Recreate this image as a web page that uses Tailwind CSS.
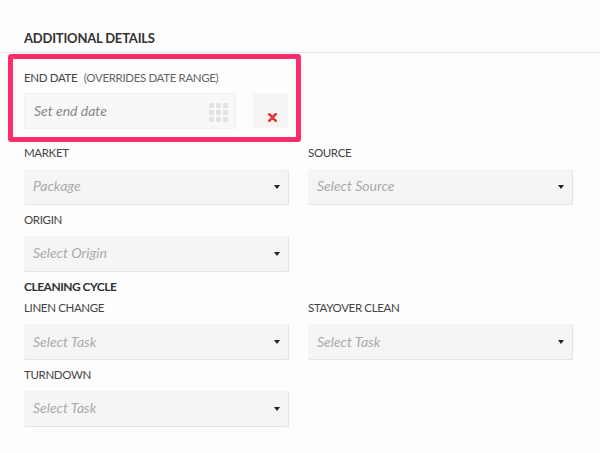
<!DOCTYPE html>
<html lang="en">
<head>
    <meta charset="UTF-8">
    <script src="https://cdn.jsdelivr.net/npm/@tailwindcss/browser@4"></script>
</head>
<body class="bg-[#fdfdfd] font-['Lato',sans-serif] text-[#444] w-[600px] h-[453px] overflow-hidden">
    <div class="relative">
        <!-- Heading -->
        <div class="h-[53px] pl-6 pt-[30px] border-b border-[#e6e6e6]">
            <h2 class="text-[13px] leading-4 font-bold text-[#333] tracking-[-0.2px]">ADDITIONAL DETAILS</h2>
        </div>

        <!-- End date (highlighted) -->
        <div class="absolute left-[8px] top-[54px] w-[293px] h-[88px] border-[5px] border-[#ff2d6b] rounded-[3px]"></div>
        <div class="h-[89px] pl-6 pt-[17px]">
            <div class="h-4 text-[11.5px] leading-4 tracking-[-0.35px] text-[#444]">END DATE <span class="ml-1 text-[#666]">(OVERRIDES DATE RANGE)</span></div>
            <div class="flex mt-[7px]">
                <div class="w-[212px] h-9 bg-[#f8f8f8] border border-[#f3f3f3] flex items-center justify-between pl-[9px] pr-[7px]">
                    <span class="pb-[2px] text-[14px] italic text-[#888]">Set end date</span>
                    <svg class="mt-[2px]" width="19" height="19" viewBox="0 0 19 19" fill="#e3e3e3">
                        <rect x="0" y="0" width="5" height="5" rx="1"/><rect x="7" y="0" width="5" height="5" rx="1"/><rect x="14" y="0" width="5" height="5" rx="1"/>
                        <rect x="0" y="7" width="5" height="5" rx="1"/><rect x="7" y="7" width="5" height="5" rx="1"/><rect x="14" y="7" width="5" height="5" rx="1"/>
                        <rect x="0" y="14" width="5" height="5" rx="1"/><rect x="7" y="14" width="5" height="5" rx="1"/><rect x="14" y="14" width="5" height="5" rx="1"/>
                    </svg>
                </div>
                <div class="ml-[17px] mt-px w-[35px] h-[34px] bg-[#f5f5f5] flex items-end justify-end pb-[6px] pr-[11px]">
                    <svg width="9" height="9" viewBox="0 0 9 9" stroke="#ea3232" stroke-width="2.6" stroke-linecap="round"><path d="M1.2 1.2l6.6 6.6M7.8 1.2L1.2 7.8"/></svg>
                </div>
            </div>
        </div>

        <!-- Market / source -->
        <div class="grid grid-cols-[265px_265px] gap-x-[19px] pl-6">
            <div class="h-[66px] pt-[3px]">
                <div class="h-4 text-[11.5px] leading-4 tracking-[-0.35px]">MARKET</div>
                <div class="mt-2 h-9 bg-[#f5f5f5] border-b border-r border-[#e4e4e4] rounded-[2px] flex items-center justify-between pl-[9px] pr-[8px]">
                    <span class="pb-[2px] text-[14px] italic text-[#aaa]">Package</span>
                    <span class="w-0 h-0 border-x-[3px] border-x-transparent border-t-[4px] border-t-[#222]"></span>
                </div>
            </div>
            <div class="h-[66px] pt-[3px]">
                <div class="h-4 text-[11.5px] leading-4 tracking-[-0.35px]">SOURCE</div>
                <div class="mt-2 h-9 bg-[#f5f5f5] border-b border-r border-[#e4e4e4] rounded-[2px] flex items-center justify-between pl-[9px] pr-[8px]">
                    <span class="pb-[2px] text-[14px] italic text-[#aaa]">Select Source</span>
                    <span class="w-0 h-0 border-x-[3px] border-x-transparent border-t-[4px] border-t-[#222]"></span>
                </div>
            </div>
            <div class="h-[67px] pt-[4px]">
                <div class="h-4 text-[11.5px] leading-4 tracking-[-0.35px]">ORIGIN</div>
                <div class="mt-2 h-9 bg-[#f5f5f5] border-b border-r border-[#e4e4e4] rounded-[2px] flex items-center justify-between pl-[9px] pr-[8px]">
                    <span class="pb-[2px] text-[14px] italic text-[#aaa]">Select Origin</span>
                    <span class="w-0 h-0 border-x-[3px] border-x-transparent border-t-[4px] border-t-[#222]"></span>
                </div>
            </div>
        </div>

        <!-- Cleaning cycle -->
        <div class="pl-6 pt-[4px] h-[22px] text-[12px] leading-4 font-bold tracking-[-0.5px] text-[#333]">CLEANING CYCLE</div>
        <div class="grid grid-cols-[265px_265px] gap-x-[19px] pl-6">
            <div class="h-[67px] pt-[3px]">
                <div class="h-4 text-[11.5px] leading-4 tracking-[-0.35px]">LINEN CHANGE</div>
                <div class="mt-2 h-9 bg-[#f5f5f5] border-b border-r border-[#e4e4e4] rounded-[2px] flex items-center justify-between pl-[9px] pr-[8px]">
                    <span class="pb-px text-[14px] italic text-[#aaa]">Select Task</span>
                    <span class="w-0 h-0 border-x-[3px] border-x-transparent border-t-[4px] border-t-[#222]"></span>
                </div>
            </div>
            <div class="h-[67px] pt-[3px]">
                <div class="h-4 text-[11.5px] leading-4 tracking-[-0.35px]">STAYOVER CLEAN</div>
                <div class="mt-2 h-9 bg-[#f5f5f5] border-b border-r border-[#e4e4e4] rounded-[2px] flex items-center justify-between pl-[9px] pr-[8px]">
                    <span class="pb-px text-[14px] italic text-[#aaa]">Select Task</span>
                    <span class="w-0 h-0 border-x-[3px] border-x-transparent border-t-[4px] border-t-[#222]"></span>
                </div>
            </div>
            <div class="h-[67px] pt-[3px]">
                <div class="h-4 text-[11.5px] leading-4 tracking-[-0.35px]">TURNDOWN</div>
                <div class="mt-2 h-9 bg-[#f5f5f5] border-b border-r border-[#e4e4e4] rounded-[2px] flex items-center justify-between pl-[9px] pr-[8px]">
                    <span class="pb-[2px] text-[14px] italic text-[#aaa]">Select Task</span>
                    <span class="w-0 h-0 border-x-[3px] border-x-transparent border-t-[4px] border-t-[#222]"></span>
                </div>
            </div>
        </div>
    </div>
</body>
</html>
